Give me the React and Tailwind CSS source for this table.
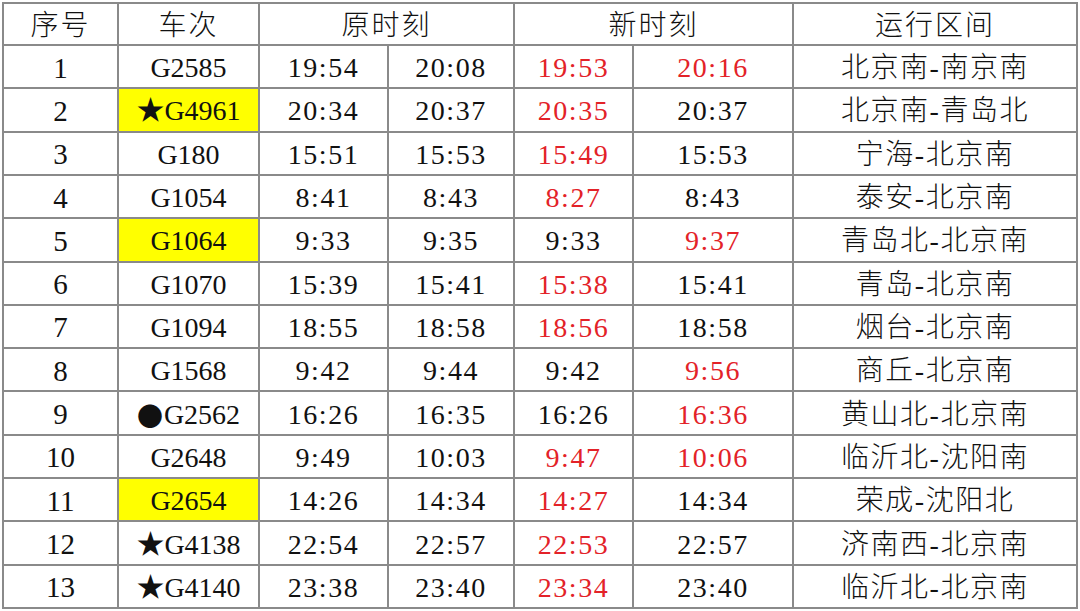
import React from "react";

const R = (t) => ({ t, red: true });

const rows = [
  ["1", "G2585", false, "19:54", "20:08", R("19:53"), R("20:16"), "北京南-南京南"],
  ["2", "★G4961", true, "20:34", "20:37", R("20:35"), "20:37", "北京南-青岛北"],
  ["3", "G180", false, "15:51", "15:53", R("15:49"), "15:53", "宁海-北京南"],
  ["4", "G1054", false, "8:41", "8:43", R("8:27"), "8:43", "泰安-北京南"],
  ["5", "G1064", true, "9:33", "9:35", "9:33", R("9:37"), "青岛北-北京南"],
  ["6", "G1070", false, "15:39", "15:41", R("15:38"), "15:41", "青岛-北京南"],
  ["7", "G1094", false, "18:55", "18:58", R("18:56"), "18:58", "烟台-北京南"],
  ["8", "G1568", false, "9:42", "9:44", "9:42", R("9:56"), "商丘-北京南"],
  ["9", "●G2562", false, "16:26", "16:35", "16:26", R("16:36"), "黄山北-北京南"],
  ["10", "G2648", false, "9:49", "10:03", R("9:47"), R("10:06"), "临沂北-沈阳南"],
  ["11", "G2654", true, "14:26", "14:34", R("14:27"), "14:34", "荣成-沈阳北"],
  ["12", "★G4138", false, "22:54", "22:57", R("22:53"), "22:57", "济南西-北京南"],
  ["13", "★G4140", false, "23:38", "23:40", R("23:34"), "23:40", "临沂北-北京南"],
];

const cell =
  "flex items-center justify-center pt-[3px] border-r-2 border-b-2 border-[#8a8a8a] whitespace-nowrap";

function Time({ v }) {
  if (typeof v === "object") {
    return <div className={`${cell} text-[#e32228] tracking-[1.5px]`}>{v.t}</div>;
  }
  return <div className={`${cell} tracking-[1.5px]`}>{v}</div>;
}

function Train({ name }) {
  if (name.startsWith("●")) {
    return (
      <>
        <span
          className="text-[26px] mr-[1px]"
          style={{ fontFamily: '"Noto Sans CJK SC", sans-serif' }}
        >
          ●
        </span>
        {name.slice(1)}
      </>
    );
  }
  return name;
}

export default function App() {
  return (
    <div className="w-[1080px] h-[611px] bg-white pt-[2px] pl-[2px]">
      <div
        className="grid w-[1076px] h-[607px] border-l-2 border-t-2 border-[#8a8a8a] text-[28px] leading-none text-[#111] font-light grid-cols-[115px_141px_129px_126px_119px_160px_1fr] grid-rows-[42px_repeat(13,1fr)]"
        style={{ fontFamily: '"Liberation Serif", "Noto Sans CJK SC", serif' }}
      >
        <div className={`${cell} tracking-[2px]`}>序号</div>
        <div className={`${cell} tracking-[2px]`}>车次</div>
        <div className={`${cell} col-span-2 tracking-[2px]`}>原时刻</div>
        <div className={`${cell} col-span-2 tracking-[2px]`}>新时刻</div>
        <div className={`${cell} tracking-[2px]`}>运行区间</div>
        {rows.map((r) => (
          <React.Fragment key={r[0]}>
            <div className={`${cell} text-[29px]`}>{r[0]}</div>
            <div className={`${cell} ${r[2] ? "bg-[#ffff00]" : ""}`}>
              <Train name={r[1]} />
            </div>
            <Time v={r[3]} />
            <Time v={r[4]} />
            <Time v={r[5]} />
            <Time v={r[6]} />
            <div className={`${cell} tracking-[1.5px]`}>{r[7]}</div>
          </React.Fragment>
        ))}
      </div>
    </div>
  );
}
